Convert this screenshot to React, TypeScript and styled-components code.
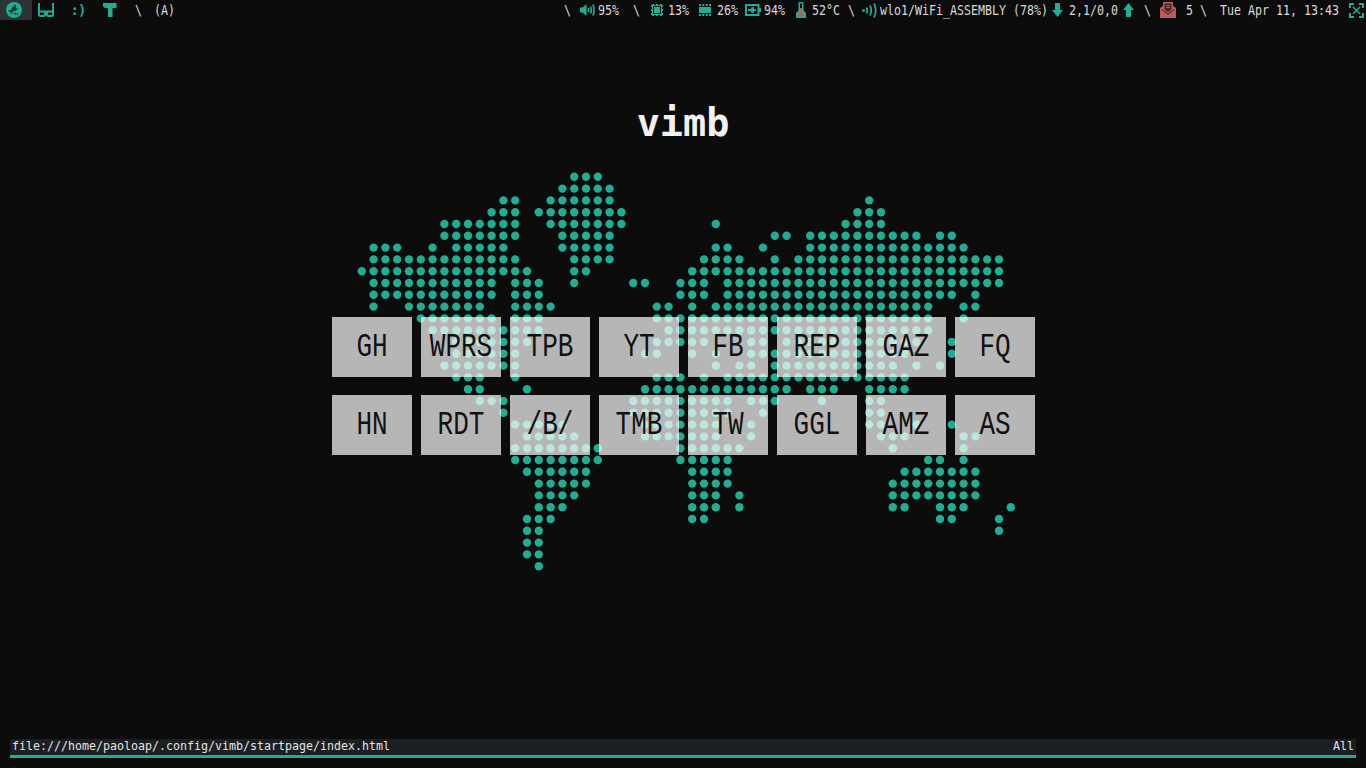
import styled, { createGlobalStyle } from "styled-components";

const TEAL = "#21ad92";
const RED = "#b85c5c";

const GlobalStyle = createGlobalStyle`
  html, body {
    margin: 0;
    height: 100%;
    background: #0c0c0c;
  }
`;

const Screen = styled.div`
  width: 1366px;
  height: 768px;
  display: flex;
  flex-direction: column;
  overflow: hidden;
  background: #0c0c0c;
  color: #d9d9d9;
  font-family: "DejaVu Sans Mono", monospace;
`;

const Bar = styled.header`
  height: 20px;
  flex: none;
  display: flex;
  justify-content: space-between;
  font-size: 11.63px;
  line-height: 20px;
`;

const BarGroup = styled.div`
  display: flex;
  align-items: center;
`;

const Workspace = styled.div<{ $active?: boolean }>`
  width: 32px;
  height: 20px;
  display: flex;
  align-items: center;
  justify-content: center;
  background: ${(p) => (p.$active ? "#2e3338" : "transparent")};
`;

const Item = styled.span<{ $ml?: number }>`
  display: inline-block;
  flex: none;
  margin-left: ${(p) => p.$ml ?? 0}px;
  white-space: pre;
  transform: scaleY(1.18);
`;

const Smiley = styled.span`
  margin-right: 4px;
  color: ${TEAL};
  font-size: 14px;
  font-weight: 700;
  letter-spacing: -1px;
`;

const Icon = styled.svg<{ $ml?: number; $mr?: number }>`
  display: block;
  flex: none;
  margin-left: ${(p) => p.$ml ?? 0}px;
  margin-right: ${(p) => p.$mr ?? 0}px;
`;

const Main = styled.main`
  flex: 1;
  display: flex;
  flex-direction: column;
  align-items: center;
`;

const Title = styled.h1`
  margin: 78px 0 0;
  height: 74px;
  font-size: 38.5px;
  line-height: 50px;
  font-weight: 700;
  color: #f1f1f1;
`;

const Stage = styled.div`
  width: 703px;
  display: grid;
`;

const WorldMap = styled.svg`
  grid-area: 1 / 1;
  display: block;
`;

const Links = styled.nav`
  grid-area: 1 / 1;
  align-self: start;
  margin-top: 145px;
  display: grid;
  grid-template-columns: repeat(8, 80px);
  grid-auto-rows: 60px;
  column-gap: 9px;
  row-gap: 18px;
`;

const LinkButton = styled.a`
  display: flex;
  align-items: center;
  justify-content: center;
  padding-left: 1px;
  background: rgba(255, 255, 255, 0.7);
  color: #111;
  font-family: "Liberation Mono", monospace;
  font-size: 26px;
`;

const LinkLabel = styled.span`
  display: inline-block;
  transform: scaleY(1.28);
`;

const Status = styled.footer`
  height: 16px;
  flex: none;
  margin: 0 10px 10px;
  padding: 0 2px;
  display: flex;
  justify-content: space-between;
  background: #1c1f22;
  border-bottom: 3px solid ${TEAL};
  font-size: 11.63px;
  line-height: 15px;
  color: #e4e4e4;
`;

const StatusText = styled.span`
  display: inline-block;
  transform: scaleY(1.12);
`;

const mapRows = [
  "18-20",
  "17-21",
  "12-13,16-21,43",
  "11-13,15-22,42-44",
  "7-13,16-22,30,41-44",
  "7-13,17-21,35-36,38-47,49-50",
  "1-3,6,8-12,17-21,30-31,34,38-51",
  "1-13,18-21,29-32,35,37-54",
  "0-14,18-19,28-54",
  "1-11,13-15,18,23-24,27-29,31-54",
  "1-11,13-15,27-29,31-50,52",
  "1,4-10,13-16,25-26,28,30-48,51-52",
  "5-11,13-15,25-48,51",
  "6-15,26-48",
  "8-14,25-29,33-34,36-47,50",
  "8-13,24-25,28,30,33-46,50",
  "7-13,30,32-33,35-45,47,49",
  "8-10,13,25-27,29,31-46",
  "9-10,14,24-36,38-40,43-46",
  "10-12,23-31,33-35,39,43-44",
  "12,23-31,34,43-44",
  "13-17,24-30,33,43-44,47,50",
  "14-18,24-30,33,44-46,51-52",
  "13-20,27-32,45,51",
  "13-20,27-31,48-49,51",
  "14-19,28-31,46-52",
  "15-19,28-31,45-52",
  "15-18,28-30,32,45-52",
  "15-17,28-30,32,45-46,49-51,55",
  "14-16,28-29,49-50,54",
  "14-15,54",
  "14-15",
  "14-15",
  "15",
];

const mapDots = mapRows.flatMap((row, r) =>
  row.split(",").flatMap((part) => {
    const [from, to = from] = part.split("-").map(Number);
    const cols: [number, number][] = [];
    for (let c = from; c <= Number(to); c++) cols.push([c, r]);
    return cols;
  })
);

const topLinks = ["GH", "WPRS", "TPB", "YT", "FB", "REP", "GAZ", "FQ"];
const bottomLinks = ["HN", "RDT", "/B/", "TMB", "TW", "GGL", "AMZ", "AS"];

function GlobeIcon() {
  return (
    <Icon width="16" height="16" viewBox="0 0 18 18" $mr={4}>
      <circle cx="9" cy="9" r="9" fill={TEAL} />
      <path
        d="M9 3h2v4h2v2h-2v1H8v2H6v2H5v-3H3V9h3V7h1V5h2zM9 12h2v1h3v1H9z"
        fill="#1a3a38"
      />
    </Icon>
  );
}

function GlassesIcon() {
  return (
    <Icon width="16" height="14" viewBox="0 0 16 14" $mr={4}>
      <path
        d="M1 0v11.500q0 1.500 1.500 1.500h3q1.500 0 1.500-1.500V8.500H1M15 0v11.500q0 1.500-1.500 1.500h-3Q9 13 9 11.500V8.500h6M7 10h2"
        fill="none"
        stroke={TEAL}
        strokeWidth="2"
      />
    </Icon>
  );
}

function HammerIcon() {
  return (
    <Icon width="14" height="14" viewBox="0 0 14 14" $mr={5}>
      <path d="M0 0h13.500v5H9.500v9H5V5H2L0 3.500z" fill={TEAL} />
    </Icon>
  );
}

function SpeakerIcon() {
  return (
    <Icon width="15" height="12" viewBox="0 0 15 12" $ml={9}>
      <path d="M0 3.500h2.500L6.500 0v12L2.500 8.500H0z" fill={TEAL} />
      <path d="M8.500 4v4M10.500 2.500q1.500 3.500 0 7M13 .5q2 5.500 0 11" fill="none" stroke={TEAL} strokeWidth="1.700" />
    </Icon>
  );
}

function CpuIcon() {
  return (
    <Icon width="12" height="12" viewBox="0 0 12 12" $ml={11}>
      <path d="M1 0h2v1H1zM5 0h2v1H5zM9 0h2v1H9zM1 11h2v1H1zM5 11h2v1H5zM9 11h2v1H9zM0 1h1v2H0zM0 5h1v2H0zM0 9h1v2H0zM11 1h1v2h-1zM11 5h1v2h-1zM11 9h1v2h-1z" fill={TEAL} />
      <rect x="3" y="3" width="6" height="6" fill={TEAL} />
      <rect x="1.500" y="1.500" width="9" height="9" fill="none" stroke={TEAL} />
    </Icon>
  );
}

function RamIcon() {
  return (
    <Icon width="12" height="12" viewBox="0 0 12 12" $ml={10}>
      <path d="M0 3h12v6H0zM0 0h2v2H0zM3.300 0h2v2h-2zM6.700 0h2v2h-2zM10 0h2v2h-2zM0 10h2v2H0zM3.300 10h2v2h-2zM6.700 10h2v2h-2zM10 10h2v2h-2z" fill={TEAL} />
    </Icon>
  );
}

function BatteryIcon() {
  return (
    <Icon width="16" height="12" viewBox="0 0 16 12" $ml={7}>
      <path d="M1 1h12.500v10H1z" fill="none" stroke={TEAL} strokeWidth="2" />
      <path d="M14 4h2v4h-2zM3 5h3V3.500L9 3v2h2v2H9v2L6 8.500V7H3z" fill={TEAL} />
    </Icon>
  );
}

function ThermoIcon() {
  return (
    <Icon width="10" height="16" viewBox="0 0 10 16" $ml={11}>
      <path d="M2.500 1q0-1 1-1h3q1 0 1 1v7.500L10 11v5H0v-5l2.500-2.500z" fill={TEAL} />
      <path d="M4 1.500h2V6H4z" fill="#0c0c0c" />
      <path d="M4 6h2v4l2 2v2.500H2V12l2-2z" fill={RED} />
    </Icon>
  );
}

function WifiIcon() {
  return (
    <Icon width="15" height="15" viewBox="0 0 15 15" $ml={7}>
      <circle cx="1.500" cy="7.500" r="1.500" fill={TEAL} />
      <path d="M4.500 4.500q1.500 3 0 6M8 2.500q2.500 5 0 10M12 .5q3.500 7 0 14" fill="none" stroke={TEAL} strokeWidth="1.700" />
    </Icon>
  );
}

function ArrowIcon({ up, ml }: { up?: boolean; ml: number }) {
  return (
    <Icon width="11" height="14" viewBox="0 0 11 14" $ml={ml}>
      <path d={up ? "M5.500 0L11 7H8v7H3V7H0z" : "M5.500 14L11 7H8V0H3v7H0z"} fill={TEAL} />
    </Icon>
  );
}

function MailIcon() {
  return (
    <Icon width="16" height="16" viewBox="0 0 16 16" $ml={9}>
      <path d="M0 6l3-2V0h10v4l3 2v10H0z" fill={RED} />
      <path d="M4.500 1.500h7v6L8 10 4.500 7.500z" fill="#4a1f1f" />
      <path d="M6 3.500h4M6 5.500h4" stroke={RED} />
      <path d="M1.500 7.500L8 12l6.500-4.500" fill="none" stroke="#3a1818" />
    </Icon>
  );
}

function FullscreenIcon() {
  return (
    <Icon width="15" height="15" viewBox="0 0 15 15" $ml={10} $mr={2}>
      <path d="M1 5V1h4M10 1h4v4M14 10v4h-4M5 14H1v-4" fill="none" stroke={TEAL} strokeWidth="2" />
      <path d="M4 4l7 7M11 4l-7 7" stroke={TEAL} strokeWidth="1.500" />
    </Icon>
  );
}

export default function App() {
  return (
    <>
      <GlobalStyle />
      <Screen>
        <Bar>
          <BarGroup>
            <Workspace $active>
              <GlobeIcon />
            </Workspace>
            <Workspace>
              <GlassesIcon />
            </Workspace>
            <Workspace>
              <Smiley>:)</Smiley>
            </Workspace>
            <Workspace>
              <HammerIcon />
            </Workspace>
            <Item $ml={7}>\</Item>
            <Item $ml={12}>(A)</Item>
          </BarGroup>
          <BarGroup>
            <Item>\</Item>
            <SpeakerIcon />
            <Item $ml={3}>95%</Item>
            <Item $ml={14}>\</Item>
            <CpuIcon />
            <Item $ml={5}>13%</Item>
            <RamIcon />
            <Item $ml={6}>26%</Item>
            <BatteryIcon />
            <Item $ml={3}>94%</Item>
            <ThermoIcon />
            <Item $ml={6}>52°C</Item>
            <Item $ml={8}>\</Item>
            <WifiIcon />
            <Item $ml={3}>wlo1/WiFi_ASSEMBLY (78%)</Item>
            <ArrowIcon ml={4} />
            <Item $ml={6}>2,1/0,0</Item>
            <ArrowIcon up ml={5} />
            <Item $ml={10}>\</Item>
            <MailIcon />
            <Item $ml={10}>5</Item>
            <Item $ml={7}>\</Item>
            <Item $ml={13}>Tue Apr 11, 13:43</Item>
            <FullscreenIcon />
          </BarGroup>
        </Bar>
        <Main>
          <Title>vimb</Title>
          <Stage>
            <WorldMap width="703" height="410" viewBox="0 0 703 410">
              {mapDots.map(([c, r]) => (
                <circle key={`${c}-${r}`} cx={29.8 + 11.8 * c} cy={4.8 + 11.8 * r} r="4.2" fill={TEAL} />
              ))}
            </WorldMap>
            <Links>
              {[...topLinks, ...bottomLinks].map((name) => (
                <LinkButton key={name}>
                  <LinkLabel>{name}</LinkLabel>
                </LinkButton>
              ))}
            </Links>
          </Stage>
        </Main>
        <Status>
          <StatusText>file:///home/paoloap/.config/vimb/startpage/index.html</StatusText>
          <StatusText>All</StatusText>
        </Status>
      </Screen>
    </>
  );
}
